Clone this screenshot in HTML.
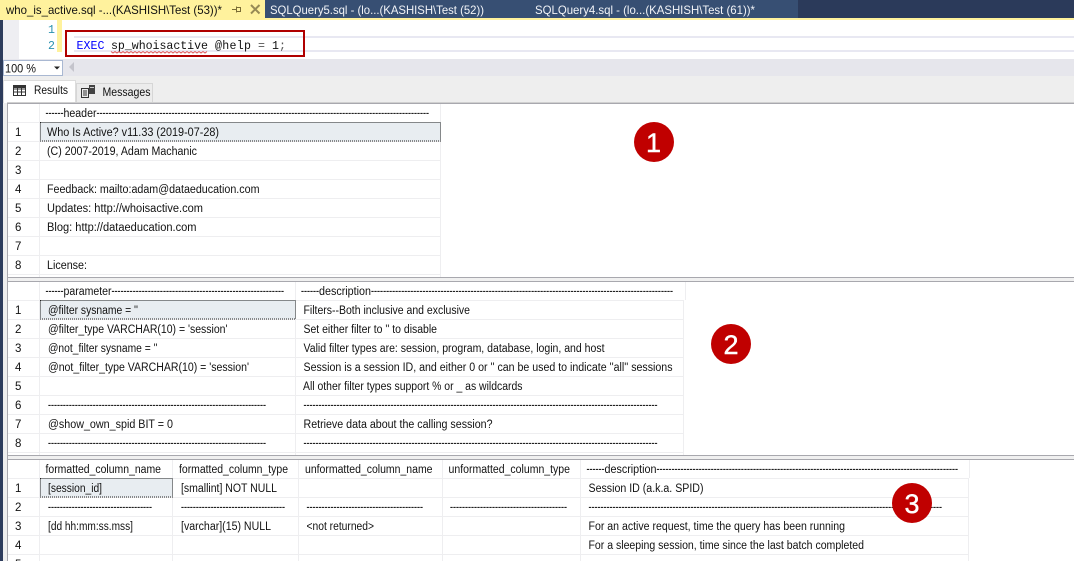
<!DOCTYPE html>
<html><head><meta charset="utf-8"><style>
html,body{margin:0;padding:0;background:#fff;width:1074px;height:561px;overflow:hidden}
svg{display:block}
rect{shape-rendering:crispEdges}
text{font-family:"Liberation Sans",sans-serif;font-size:11.5px;fill:#111;white-space:pre}
text.d{font-size:9px;font-weight:bold;fill:#222}
text.c{font-size:27px;fill:#fff;stroke:#fff;stroke-width:.4px}
.m{font-family:"Liberation Mono",monospace;font-size:11.6px}
.l{fill:#eeeef0}
.b{fill:#a8a8ae}
</style></head><body>
<svg width="1074" height="561" viewBox="0 0 1074 561" xmlns="http://www.w3.org/2000/svg">
<rect width="1074" height="561" fill="#fff"/>
<!-- tab strip -->
<rect width="1074" height="18" fill="#2b3a5a"/>
<rect x="265" width="533" height="18" fill="#374f73"/>
<rect width="265" height="18" fill="#fff29d"/>
<rect y="18" width="1074" height="2" fill="#fff29d"/>
<text x="6" y="14" textLength="216" lengthAdjust="spacingAndGlyphs" style="font-size:12px">who_is_active.sql -...(KASHISH\Test (53))*</text>
<text x="270" y="14" textLength="214" lengthAdjust="spacingAndGlyphs" style="font-size:12px;fill:#f2f4f8">SQLQuery5.sql - (lo...(KASHISH\Test (52))</text>
<text x="535" y="14" textLength="220" lengthAdjust="spacingAndGlyphs" style="font-size:12px;fill:#f2f4f8">SQLQuery4.sql - (lo...(KASHISH\Test (61))*</text>
<path d="M232 9.5h4.5M236.5 6.5v6M237 7.5h3.5v4H237" stroke="#7a6c35" fill="none" shape-rendering="crispEdges"/>
<path d="M251 5l8.5 8.5M259.5 5L251 13.5" stroke="#968a55" stroke-width="2" fill="none"/>
<!-- editor -->
<rect y="20" width="3" height="541" fill="#2d3c5c"/>
<rect x="3" y="20" width="16" height="39" fill="#eeeef2"/>
<rect x="57" y="20" width="5" height="32" fill="#fff29d"/>
<rect x="74" y="36" width="1000" height="2" fill="#e8e8f2"/>
<rect x="74" y="50" width="1000" height="2" fill="#e8e8f2"/>
<text class="m" x="48" y="33" style="fill:#2b91af">1</text>
<text class="m" x="48" y="49" style="fill:#2b91af">2</text>
<text class="m" x="76.5" y="49" style="fill:#0000ff" textLength="28">EXEC</text>
<text class="m" x="111" y="49" textLength="97">sp_whoisactive</text>
<text class="m" x="215" y="49" textLength="36">@help</text>
<text class="m" x="258" y="49" style="fill:#555">=</text>
<text class="m" x="272" y="49">1</text>
<text class="m" x="279" y="49" style="fill:#555">;</text>
<path d="M111 51.5l2 1.5 2-1.5 2 1.5 2-1.5 2 1.5 2-1.5 2 1.5 2-1.5 2 1.5 2-1.5 2 1.5 2-1.5 2 1.5 2-1.5 2 1.5 2-1.5 2 1.5 2-1.5 2 1.5 2-1.5 2 1.5 2-1.5 2 1.5 2-1.5 2 1.5 2-1.5 2 1.5 2-1.5 2 1.5 2-1.5 2 1.5 2-1.5 2 1.5 2-1.5 2 1.5 2-1.5 2 1.5 2-1.5 2 1.5 2-1.5 2 1.5 2-1.5 2 1.5 2-1.5 2 1.5 2-1.5 2 1.5 2-1.5" stroke="#e05050" fill="none" stroke-width=".9"/>
<rect x="66" y="31" width="238" height="25" fill="none" stroke="#b00000" stroke-width="2"/>
<!-- zoom bar -->
<rect y="59" x="3" width="1071" height="17" fill="#e6e6ec"/>
<rect y="76" x="3" width="1071" height="27" fill="#eeeeee"/>
<rect x="3.5" y="60.5" width="59" height="15" fill="#fff" stroke="#a9b8d2"/>
<text x="5" y="72.5" textLength="31" lengthAdjust="spacingAndGlyphs" style="font-size:12px">100 %</text>
<path d="M54 66.5h6l-3 3z" fill="#222"/>
<path d="M74 62v10l-5-5z" fill="#c4c4cc"/>
<!-- tabs -->
<rect x="76.5" y="83.5" width="76" height="19" fill="#ececec" stroke="#d6d6d6"/>
<rect x="3.5" y="80.5" width="72" height="23" fill="#fff" stroke="#dcdcdc"/>
<rect x="4" y="101" width="71" height="3" fill="#fff"/>
<g shape-rendering="crispEdges">
<path d="M13.5 85.5h12v10h-12zM13.5 89h12M13.5 92h12M17.5 85.5v10M21.5 85.5v10" stroke="#333" fill="none"/>
<rect x="13" y="85" width="13" height="3" fill="#333"/>
<path d="M81.5 88.5h7v9h-7zM83 91h4M83 93h4M83 95h4" stroke="#333" fill="none"/>
</g>
<rect x="89" y="85" width="6" height="9" fill="#444"/>
<rect x="90" y="87" width="4" height="1" fill="#ccc"/>
<text x="34" y="94" textLength="34" lengthAdjust="spacingAndGlyphs" style="font-size:12px">Results</text>
<text x="102.5" y="96" textLength="48" lengthAdjust="spacingAndGlyphs" style="font-size:12px">Messages</text>

<!-- panel frame -->
<rect x="3" y="103" width="4" height="458" fill="#eeeeee"/>
<rect x="7" y="103" width="1" height="458" class="b"/>
<rect x="8" y="277" width="1066" height="4" fill="#f0f0f0"/>
<rect x="8" y="455" width="1066" height="4" fill="#f0f0f0"/>
<rect x="7" y="102" width="1067" height="1" fill="#d0d0d0"/>
<rect x="7" y="103" width="1067" height="1" class="b"/>
<rect x="7" y="277" width="1067" height="1" class="b"/>
<rect x="7" y="281" width="1067" height="1" class="b"/>
<rect x="7" y="455" width="1067" height="1" class="b"/>
<rect x="7" y="459" width="1067" height="1" class="b"/>

<!-- grid 1 lines -->
<g class="l">
<rect x="8" y="122" width="433" height="1"/><rect x="8" y="141" width="433" height="1"/><rect x="8" y="160" width="433" height="1"/><rect x="8" y="179" width="433" height="1"/><rect x="8" y="198" width="433" height="1"/><rect x="8" y="217" width="433" height="1"/><rect x="8" y="236" width="433" height="1"/><rect x="8" y="255" width="433" height="1"/><rect x="8" y="274" width="433" height="1"/>
<rect x="39" y="104" width="1" height="173"/><rect x="440" y="104" width="1" height="173"/>
</g>
<rect x="40" y="122" width="401" height="19" fill="#e8edf1"/>
<rect x="40.5" y="122.5" width="400" height="18.5" fill="none" stroke="#222" stroke-dasharray="1 1"/>
<g>
<text x="15" y="136">1</text><text x="15" y="155">2</text><text x="15" y="174">3</text><text x="15" y="193">4</text><text x="15" y="212">5</text><text x="15" y="231">6</text><text x="15" y="250">7</text><text x="15" y="269">8</text>
<text class="d" x="45.5" y="116" textLength="18">------</text>
<text x="63.5" y="117" textLength="33" lengthAdjust="spacingAndGlyphs">header</text>
<text class="d" x="96.5" y="116" textLength="332.5">---------------------------------------------------------------------------------------------------------------</text>
<text x="47" y="136" textLength="172" lengthAdjust="spacingAndGlyphs">Who Is Active? v11.33 (2019-07-28)</text>
<text x="47" y="155" textLength="150" lengthAdjust="spacingAndGlyphs">(C) 2007-2019, Adam Machanic</text>
<text x="47" y="193" textLength="212.5" lengthAdjust="spacingAndGlyphs">Feedback: mailto:adam@dataeducation.com</text>
<text x="47" y="212" textLength="156" lengthAdjust="spacingAndGlyphs">Updates: http://whoisactive.com</text>
<text x="47" y="231" textLength="149.5" lengthAdjust="spacingAndGlyphs">Blog: http://dataeducation.com</text>
<text x="47" y="269" textLength="40" lengthAdjust="spacingAndGlyphs">License:</text>
</g>

<!-- grid 2 lines -->
<g class="l">
<rect x="8" y="300" width="676" height="1"/><rect x="8" y="319" width="676" height="1"/><rect x="8" y="338" width="676" height="1"/><rect x="8" y="357" width="676" height="1"/><rect x="8" y="376" width="676" height="1"/><rect x="8" y="395" width="676" height="1"/><rect x="8" y="414" width="676" height="1"/><rect x="8" y="433" width="676" height="1"/><rect x="8" y="452" width="676" height="1"/>
<rect x="39" y="282" width="1" height="173"/><rect x="295" y="282" width="1" height="173"/><rect x="683" y="300" width="1" height="155"/><rect x="685" y="282" width="1" height="18"/>
</g>
<rect x="40" y="300" width="256" height="19" fill="#e8edf1"/>
<rect x="40.5" y="300.5" width="255" height="18.5" fill="none" stroke="#222" stroke-dasharray="1 1"/>
<g>
<text x="15" y="314">1</text><text x="15" y="333">2</text><text x="15" y="352">3</text><text x="15" y="371">4</text><text x="15" y="390">5</text><text x="15" y="409">6</text><text x="15" y="428">7</text><text x="15" y="447">8</text>
<text class="d" x="45.5" y="294" textLength="18">------</text>
<text x="63.5" y="295" textLength="48" lengthAdjust="spacingAndGlyphs">parameter</text>
<text class="d" x="111.5" y="294" textLength="172.5">---------------------------------------------------------</text>
<text class="d" x="301" y="294" textLength="18">------</text>
<text x="319" y="295" textLength="52" lengthAdjust="spacingAndGlyphs">description</text>
<text class="d" x="371" y="294" textLength="302">----------------------------------------------------------------------------------------------------</text>
<text x="48" y="314" textLength="90" lengthAdjust="spacingAndGlyphs">@filter sysname = ''</text>
<text x="48" y="333" textLength="179.5" lengthAdjust="spacingAndGlyphs">@filter_type VARCHAR(10) = 'session'</text>
<text x="48" y="352" textLength="109.5" lengthAdjust="spacingAndGlyphs">@not_filter sysname = ''</text>
<text x="48" y="371" textLength="201" lengthAdjust="spacingAndGlyphs">@not_filter_type VARCHAR(10) = 'session'</text>
<text class="d" x="48" y="408" textLength="218">-------------------------------------------------------------------------</text>
<text x="48" y="428" textLength="125" lengthAdjust="spacingAndGlyphs">@show_own_spid BIT = 0</text>
<text class="d" x="48" y="446" textLength="218">-------------------------------------------------------------------------</text>
<text x="303.5" y="314" textLength="166.5" lengthAdjust="spacingAndGlyphs">Filters--Both inclusive and exclusive</text>
<text x="303.5" y="333" textLength="133.5" lengthAdjust="spacingAndGlyphs">Set either filter to '' to disable</text>
<text x="303.5" y="352" textLength="301" lengthAdjust="spacingAndGlyphs">Valid filter types are: session, program, database, login, and host</text>
<text x="303.5" y="371" textLength="369" lengthAdjust="spacingAndGlyphs">Session is a session ID, and either 0 or '' can be used to indicate ''all'' sessions</text>
<text x="303" y="390" textLength="219.5" lengthAdjust="spacingAndGlyphs">All other filter types support % or _ as wildcards</text>
<text class="d" x="303.5" y="408" textLength="354">----------------------------------------------------------------------------------------------------------------------</text>
<text x="303.5" y="428" textLength="189" lengthAdjust="spacingAndGlyphs">Retrieve data about the calling session?</text>
<text class="d" x="303.5" y="446" textLength="354">----------------------------------------------------------------------------------------------------------------------</text>
</g>

<!-- grid 3 lines -->
<g class="l">
<rect x="8" y="478" width="961" height="1"/><rect x="8" y="497" width="961" height="1"/><rect x="8" y="516" width="961" height="1"/><rect x="8" y="535" width="961" height="1"/><rect x="8" y="554" width="961" height="1"/>
<rect x="39" y="460" width="1" height="101"/><rect x="172" y="460" width="1" height="101"/><rect x="298" y="460" width="1" height="101"/><rect x="442" y="460" width="1" height="101"/><rect x="580" y="460" width="1" height="101"/><rect x="968" y="479" width="1" height="82"/><rect x="969" y="460" width="1" height="18"/>
</g>
<rect x="40" y="478" width="133" height="19" fill="#e8edf1"/>
<rect x="40.5" y="478.5" width="132" height="18.5" fill="none" stroke="#222" stroke-dasharray="1 1"/>
<g>
<text x="15" y="492">1</text><text x="15" y="511">2</text><text x="15" y="530">3</text><text x="15" y="549">4</text><text x="15" y="568">5</text>
<text x="45.5" y="473" textLength="115.5" lengthAdjust="spacingAndGlyphs">formatted_column_name</text>
<text x="179" y="473" textLength="109" lengthAdjust="spacingAndGlyphs">formatted_column_type</text>
<text x="305" y="473" textLength="127.5" lengthAdjust="spacingAndGlyphs">unformatted_column_name</text>
<text x="448.5" y="473" textLength="121.5" lengthAdjust="spacingAndGlyphs">unformatted_column_type</text>
<text class="d" x="586.5" y="472" textLength="18">------</text>
<text x="604.5" y="473" textLength="52" lengthAdjust="spacingAndGlyphs">description</text>
<text class="d" x="656.5" y="472" textLength="301.5">----------------------------------------------------------------------------------------------------</text>
<text x="48" y="492" textLength="54" lengthAdjust="spacingAndGlyphs">[session_id]</text>
<text x="181" y="492" textLength="96" lengthAdjust="spacingAndGlyphs">[smallint] NOT NULL</text>
<text x="588.5" y="492" textLength="115" lengthAdjust="spacingAndGlyphs">Session ID (a.k.a. SPID)</text>
<text class="d" x="48" y="510" textLength="104">-----------------------------------</text>
<text class="d" x="181" y="510" textLength="104">-----------------------------------</text>
<text class="d" x="306.5" y="510" textLength="116.5">---------------------------------------</text>
<text class="d" x="450" y="510" textLength="117">---------------------------------------</text>
<text class="d" x="588.5" y="510" textLength="353.5">----------------------------------------------------------------------------------------------------------------------</text>
<text x="48" y="530" textLength="85" lengthAdjust="spacingAndGlyphs">[dd hh:mm:ss.mss]</text>
<text x="181" y="530" textLength="90" lengthAdjust="spacingAndGlyphs">[varchar](15) NULL</text>
<text x="306.5" y="530" textLength="67.5" lengthAdjust="spacingAndGlyphs">&lt;not returned&gt;</text>
<text x="588.5" y="530" textLength="256.5" lengthAdjust="spacingAndGlyphs">For an active request, time the query has been running</text>
<text x="588.5" y="549" textLength="275.5" lengthAdjust="spacingAndGlyphs">For a sleeping session, time since the last batch completed</text>
</g>

<!-- callouts -->
<circle cx="654" cy="142" r="20" fill="#c00000"/>
<text class="c" x="653.5" y="152" text-anchor="middle">1</text>
<circle cx="731" cy="344" r="20" fill="#c00000"/>
<text class="c" x="731" y="354" text-anchor="middle">2</text>
<circle cx="912" cy="503" r="20" fill="#c00000"/>
<text class="c" x="912" y="513" text-anchor="middle">3</text>
</svg>
</body></html>
